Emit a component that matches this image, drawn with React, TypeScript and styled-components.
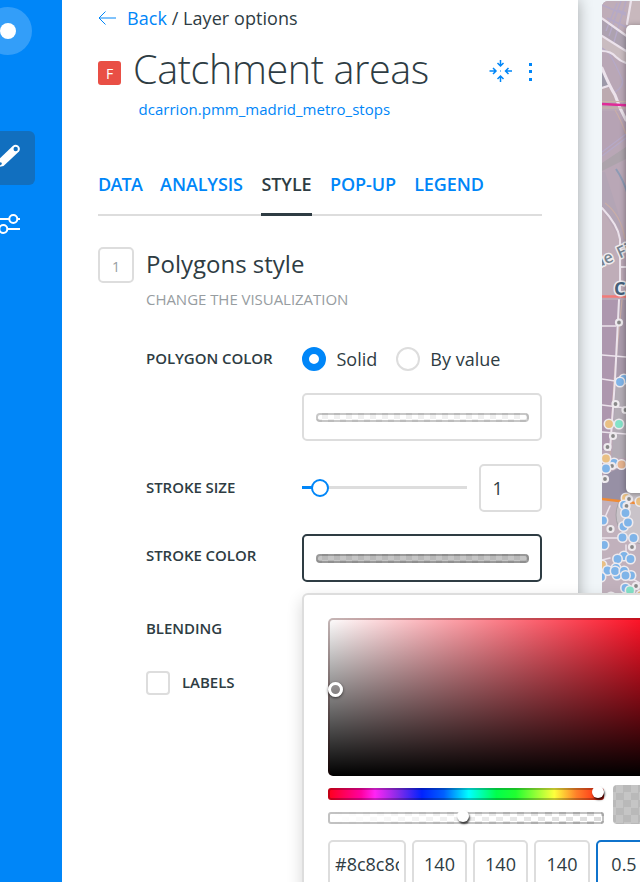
import React from "react";
import styled, { createGlobalStyle } from "styled-components";

const GlobalStyle = createGlobalStyle`
  *, *::before, *::after { box-sizing: border-box; }
  body { margin: 0; overflow: hidden; background: #fff; color: #2e3c43; font-family: "Open Sans", sans-serif; }
  button, input { font: inherit; color: inherit; }
`;

const BLUE = "#0086f8";
const LINE = "#dddddd";
const CHECKS = "repeating-conic-gradient(#e4e4e4 0% 25%, #ffffff 0% 50%) 0 0 / 12px 12px";

const Shell = styled.div`
  position: relative;
  display: grid;
  grid-template-columns: 62px 516px 1fr;
  width: 640px;
  height: 882px;
  overflow: hidden;
`;

const Rail = styled.nav`
  position: relative;
  z-index: 2;
  display: flex;
  flex-direction: column;
  background: ${BLUE};
`;

const Brand = styled.svg`
  display: block;
  width: 62px;
  height: 62px;
`;

const RailButton = styled.button<{ $active?: boolean }>`
  display: block;
  width: 35px;
  height: 54px;
  margin: ${(p) => (p.$active ? "69px 0 0" : "12px 0 0")};
  padding: 0;
  border: 0;
  border-radius: 0 6px 6px 0;
  background: ${(p) => (p.$active ? "#116fbf" : "transparent")};
  svg { display: block; }
`;

const Panel = styled.main`
  position: relative;
  z-index: 1;
  display: flex;
  flex-direction: column;
  padding: 6px 36px 0;
  background: #fff;
  box-shadow: 0 0 14px rgba(0, 0, 0, 0.32);
`;

const Crumbs = styled.div`
  display: flex;
  align-items: center;
  height: 24px;
  font-size: 18px;
  letter-spacing: 0.06px;
  white-space: pre;
  svg { width: 18px; margin-right: 11px; }
  a { color: ${BLUE}; }
`;

const TitleRow = styled.header`
  display: flex;
  align-items: center;
  height: 60px;
  margin-top: 10px;
`;

const Badge = styled.span`
  width: 23px;
  height: 24px;
  margin: 5px 12px 0 0;
  border-radius: 3px;
  background: #e94f45;
  color: #fff;
  font-size: 14px;
  line-height: 25px;
  text-align: center;
`;

const Title = styled.h1`
  flex: 1;
  margin: -2px 0 0;
  font-size: 39.500px;
  font-weight: 300;
  letter-spacing: -0.37px;
  line-height: 60px;
  white-space: nowrap;
`;

const HeaderIcons = styled.svg`
  display: block;
  width: 50px;
  height: 30px;
  margin: 2px 4px 0 0;
`;

const Source = styled.a`
  height: 20px;
  margin: -1px 0 1px 40.500px;
  color: ${BLUE};
  font-size: 15px;
  letter-spacing: 0.03px;
  line-height: 20px;
`;

const Tabs = styled.div`
  display: flex;
  gap: 18px;
  height: 56px;
  margin-top: 40px;
  box-shadow: inset 0 -2px ${LINE};
`;

const Tab = styled.button<{ $w: number; $active?: boolean; $tight?: boolean }>`
  flex: none;
  width: ${(p) => p.$w}px;
  height: 56px;
  padding: 0 0 6px;
  border: 0;
  border-bottom: 3px solid ${(p) => (p.$active ? "#2e3c43" : "transparent")};
  background: none;
  color: ${(p) => (p.$active ? "#2e3c43" : BLUE)};
  font-size: 18px;
  font-weight: 600;
  letter-spacing: ${(p) => (p.$tight ? "-0.8px" : "-0.1px")};
  white-space: nowrap;
`;

const Step = styled.section`
  display: grid;
  grid-template-columns: 36px 1fr;
  column-gap: 12px;
  margin-top: 31px;
`;

const StepNumber = styled.span`
  width: 36px;
  height: 36px;
  border: 2px solid ${LINE};
  border-radius: 5px;
  color: #979da1;
  font-size: 14px;
  line-height: 35px;
  text-align: center;
`;

const StepTitle = styled.h2`
  margin: 0;
  font-size: 24px;
  font-weight: 400;
  line-height: 34px;
`;

const StepHint = styled.p`
  grid-column: 2;
  margin: 5px 0 1px;
  color: #979da1;
  font-size: 15px;
  letter-spacing: -0.04px;
  line-height: 22px;
`;

const Field = styled.div<{ $height: number; $gap: number }>`
  display: grid;
  grid-template-columns: 156px 240px;
  align-items: center;
  height: ${(p) => p.$height}px;
  margin: ${(p) => p.$gap}px 0 0 48px;
`;

const Label = styled.span<{ $lift?: number }>`
  padding-bottom: ${(p) => p.$lift ?? 0}px;
  font-size: 15px;
  font-weight: 600;
  letter-spacing: -0.05px;
  white-space: nowrap;
`;

const Radios = styled.div`
  display: flex;
  align-items: center;
  font-size: 18px;
`;

const Radio = styled.i<{ $on?: boolean }>`
  width: 24px;
  height: 24px;
  margin-right: 10.500px;
  border: ${(p) => (p.$on ? `7.500px solid ${BLUE}` : `2px solid ${LINE}`)};
  border-radius: 50%;
`;

const RadioText = styled.span`
  margin-right: 18.500px;
`;

const ColorBox = styled.button<{ $active?: boolean }>`
  display: flex;
  align-items: center;
  grid-column: 2;
  width: 240px;
  height: 48px;
  padding: 0 11px 0 12px;
  border: 2px solid ${(p) => (p.$active ? "#2e3c43" : LINE)};
  border-radius: 5px;
  background: #fff;
`;

const ColorBar = styled.span<{ $tint: string }>`
  flex: 1;
  height: 9px;
  border: 2px solid rgba(0, 0, 0, 0.22);
  border-radius: 4px;
  background: linear-gradient(${(p) => p.$tint}, ${(p) => p.$tint}) border-box, ${CHECKS} border-box;
`;

const SizeControl = styled.div`
  display: flex;
  align-items: center;
  justify-content: space-between;
`;

const Track = styled.div`
  display: flex;
  align-items: center;
  width: 165px;
  height: 3px;
  margin-top: -2px;
  background: linear-gradient(90deg, ${BLUE} 10px, ${LINE} 10px);
`;

const Knob = styled.i`
  width: 18px;
  height: 18px;
  margin: 1px 0 0 9px;
  border: 2px solid ${BLUE};
  border-radius: 50%;
  background: #fff;
`;

const SizeInput = styled.input`
  width: 63px;
  height: 48px;
  padding: 0 11.500px;
  border: 2px solid ${LINE};
  border-radius: 5px;
  outline: 0;
  font-size: 18px;
`;

const CheckRow = styled.div`
  display: flex;
  align-items: center;
  gap: 12px;
  margin: 31px 0 0 48px;
`;

const Checkbox = styled.i`
  width: 24px;
  height: 24px;
  border: 2px solid ${LINE};
  border-radius: 4px;
`;

const MapArea = styled.aside`
  padding: 1px 0 0 24px;
  background: #f0f5f8;
`;

const MapFrame = styled.div`
  display: grid;
  height: 881px;
  overflow: hidden;
  border-radius: 6px 0 0 0;
  > * { grid-area: 1 / 1; }
`;

const WidgetCard = styled.div`
  width: 30px;
  height: 468px;
  margin: 24px 0 0 24px;
  border-radius: 5px;
  background: #fff;
  box-shadow: 0 1px 6px rgba(0, 0, 0, 0.36);
`;

/* Popup anchored under the active colour field, running past the window edge. */
const Picker = styled.div`
  position: absolute;
  z-index: 2;
  left: 302px;
  top: 593px;
  width: 460px;
  height: 360px;
  padding: 23px 24px;
  border: 2px solid ${LINE};
  border-radius: 6px;
  background: #fff;
  box-shadow: 0 6px 16px rgba(0, 0, 0, 0.16);
`;

const Spectrum = styled.div`
  position: relative;
  width: 340px;
  height: 158px;
  border: solid rgba(50, 0, 0, 0.28);
  border-width: 2px 0 0 2px;
  border-radius: 5px;
  background: linear-gradient(transparent, #000) border-box, linear-gradient(90deg, #fff, #ff0a1f 325px) border-box;
`;

const SpectrumHandle = styled.i`
  position: absolute;
  left: -2px;
  top: 62px;
  width: 15px;
  height: 15px;
  border: 3px solid #fff;
  border-radius: 50%;
  box-shadow: 0 1px 3px rgba(0, 0, 0, 0.6);
`;

const SliderRow = styled.div`
  display: flex;
  gap: 9px;
  margin-top: 9px;
`;

const Sliders = styled.div`
  display: flex;
  flex-direction: column;
  gap: 12px;
  padding-top: 3px;
`;

const Bar = styled.div<{ $alpha?: boolean }>`
  display: flex;
  align-items: center;
  width: 276px;
  height: 12px;
  border: 2px solid rgba(0, 0, 0, 0.24);
  border-radius: 3px;
  background: ${(p) =>
    p.$alpha
      ? `linear-gradient(90deg, #fff, rgba(255,255,255,0)) border-box, ${CHECKS.replace("#e4e4e4", "#dcdcdc").replace("12px 12px", "14px 9px")} border-box`
      : "linear-gradient(90deg, #ff0019, #ff00a0 12%, #ff24f5 17%, #8a2be8 25%, #0022ff 34%, #0060ff 42%, #00ffff 51%, #00ff4c 61%, #20ff30 68%, #fdff3c 82%, #ff8029 90%, #ff1a12) border-box"};
`;

const Grip = styled.i<{ $at: number }>`
  flex: none;
  width: 12px;
  height: 12px;
  margin: -4px 0 0 ${(p) => p.$at}px;
  border-radius: 50%;
  background: #fff;
  box-shadow: 1px 2px 2px rgba(0, 0, 0, 0.7);
`;

const Preview = styled.div`
  width: 70px;
  height: 39px;
  border-radius: 4px;
  background: repeating-conic-gradient(#b9b9b9 0% 25%, #c5c5c5 0% 50%) 3px 0 / 15px 15px;
`;

const ValueRow = styled.div`
  display: flex;
  gap: 6px;
  margin-top: 16px;
`;

const Value = styled.input<{ $w: number; $active?: boolean; $left?: boolean }>`
  flex: none;
  width: ${(p) => p.$w}px;
  height: 48px;
  padding: 0 ${(p) => (p.$left ? 5 : 3)}px;
  border: 2px solid ${(p) => (p.$active ? "#0f73cc" : LINE)};
  border-radius: 5px;
  outline: 0;
  font-size: 18px;
  text-align: ${(p) => (p.$left ? "left" : "center")};
`;

const stops: [number, number, string][] = [
  [17, 322.500, "s"], [22, 379, "b"], [18, 382, "b"], [13.500, 404, "s"], [23.500, 410, "s"],
  [7, 424, "o"], [17, 424, "g"], [11, 436, "s"], [5.500, 447, "s"],
  [12, 463, "b"], [10, 466, "s"], [4, 458.500, "o"], [4, 468.500, "b"], [19.500, 464.500, "r"], [3, 479, "s"],
  [24, 498, "o"], [38, 501.500, "o"], [22, 505, "b"], [27, 499, "s"], [24.500, 506, "s"], [23.500, 513, "b"],
  [1, 520.500, "b"], [21.500, 526.500, "b"], [26, 522.500, "b"], [8.500, 529, "s"], [2, 545, "b"],
  [20.500, 537.500, "b"], [31.500, 538, "b"], [30, 547, "s"], [22, 556, "b"], [15.500, 559, "b"],
  [28.500, 559, "b"], [0, 565, "o"], [14, 568, "b"], [5.500, 570.500, "b"], [15, 575, "b"], [13, 571, "b"],
  [22, 571, "b"], [29, 575.500, "b"], [23.500, 575.500, "b"], [-1, 577, "b"], [9, 597, "b"],
  [23.500, 588, "b"], [34, 586, "s"], [28, 590.500, "g"], [39, 595, "o"],
];
const stopColors: Record<string, string> = { b: "#7fb4e8", o: "#e9c084", g: "#84e2c8", r: "#e6b48f", s: "#888" };

function MapTiles() {
  return (
    <svg width="38" height="881" viewBox="0 1 38 881">
      <rect y="1" width="38" height="881" fill="#b9a7b6" />
      <path d="M0 1h38v90L24 60 0 48Z" fill="#bfadb8" />
      <path d="M0 19l24 17v15L0 36Z" fill="#ada2b0" />
      <path d="M27 1h11v24H25Z" fill="#c8b8bd" />
      <path d="M0 37l24 15v11L10 54 0 51Z" fill="#c9bcc0" />
      <path d="M0 68l9 18-9 2Z" fill="#9c98a8" />
      <path d="M0 88h8l9 20H0Z" fill="#bcaab0" />
      <path d="M0 111h24v26L0 155Z" fill="#b6a3b4" />
      <path d="M0 163l24-16v12L0 171Z" fill="#aca3ab" />
      <path d="M0 172h3l16 50-1 8L0 206Z" fill="#b3a5b5" />
      <path d="M0 210l18 28 4 60H0Z" fill="#bfadb8" />
      <path d="M0 300h16L8 450H0Z" fill="#ad97ae" />
      <path d="M16 300h8v120h-14Z" fill="#a99aab" />
      <path d="M14 378h12v80H10Z" fill="#b3acb5" />
      <path d="M0 476l26-12v36H0Z" fill="#9790a5" />
      <path d="M0 500h38v100H0Z" fill="#c1b1bc" />
      <circle cx="43" cy="515" r="29" fill="#c9c3c9" stroke="#a5a1a6" />
      <g fill="none" stroke="#b5a9c7" strokeWidth="1.4">
        <path d="M4 31 15 3M12 42 24 1M0 5 24 15M5 18l19 9M19 1 7 36M15 10l9 3M0 152l24-18M0 156l24-18" />
        <path d="M0 48l7 5q6 10 13 26 2 5-3 10l-4 3" />
      </g>
      <g fill="none" stroke="#c9ada6" strokeWidth="1.2">
        <path d="M13 110q6 10 11 24M3 203q16 12 20 36M20 300 12 380 8 455" />
      </g>
      <g fill="none" stroke="#ece3ec" strokeLinecap="round">
        <path d="M25 24 29 1M0 18.500l24 17M0 36l24 15M0 51q9 0 14 6 4 4 10 6M0 88l6-2" strokeWidth="2.200" />
        <path d="M0 68q7 17 13 27 4 12 11 25" strokeWidth="3" />
        <path d="M0 208q16 17 18 31v28M18 267v30M19 267h6M17 300 13 380 8 450" strokeWidth="2" />
        <path d="M0 326h14M0 355l24 2M0 379l13 2M0 405l24 3M0 432l24 2M0 538h17M8 506 0 524M24 545v15M30 520l-4 4M0 560l8-2M24 575l14 8" strokeWidth="1.500" />
      </g>
      <path d="M14 169q7 10 12 26" fill="none" stroke="#8e9bb5" strokeWidth="2" />
      <path d="M0 101.500h38M0 108h38" stroke="#c9b3a8" />
      <path d="M0 104l24 1.200" stroke="#df2b98" strokeWidth="2.500" />
      <path d="M0 296.500h38" stroke="#f27b78" strokeWidth="2.500" />
      <path d="M0 499l38 4.500" stroke="#ef8b36" strokeWidth="2.500" />
      <g fontFamily="Open Sans, sans-serif" stroke="#f1edef" strokeWidth="3" paintOrder="stroke" strokeLinejoin="round">
        <text transform="translate(-5 268.500) rotate(-24)" fontSize="16" fontWeight="600" wordSpacing="1.500" fill="#75838f">de Fi</text>
        <text x="12" y="295" fontSize="18" fontWeight="700" fill="#44607a">C</text>
      </g>
      {stops.map(([x, y, kind], i) => (
        <circle key={i} cx={x} cy={y} r={kind === "s" ? 3 : 4.700} fill={stopColors[kind]} stroke="#eeeaee" strokeWidth={kind === "s" ? 2.200 : 1.600} />
      ))}
    </svg>
  );
}

export default function App() {
  return (
    <>
      <GlobalStyle />
      <Shell>
        <Rail>
          <Brand viewBox="0 0 62 62">
            <circle cx="8" cy="31" r="24" fill="#339ef9" />
            <circle cx="8" cy="31" r="8" fill="#fff" />
          </Brand>
          <RailButton $active aria-label="Edit">
            <svg width="35" height="54" viewBox="0 131 35 54">
              <path d="M-3 161 13 145.800q2.500-2 5.300 0 2.800 2.800.7 5.700L3.500 166-5 168Z" fill="#fff" />
              <circle cx="15.700" cy="149" r="2.200" fill="#116fbf" />
              <path d="M-1 163.500l2-1.500 1 2-2 1.500Z" fill="#116fbf" />
            </svg>
          </RailButton>
          <RailButton aria-label="Settings">
            <svg width="35" height="54" viewBox="0 197 35 54" fill="none" stroke="#fff" strokeWidth="2">
              <path d="M0 219h9M17.500 219H20M8 229h12" />
              <circle cx="13.300" cy="219" r="4" />
              <circle cx="3.300" cy="229" r="4" />
            </svg>
          </RailButton>
        </Rail>

        <Panel>
          <Crumbs>
            <svg width="18" height="14" viewBox="0 0 18 14" fill="none" stroke={BLUE} strokeWidth="1">
              <path d="M7.500.5 1 7l6.500 6.500M1 7h17" />
            </svg>
            <a>Back</a>
            <span> / Layer options</span>
          </Crumbs>
          <TitleRow>
            <Badge>F</Badge>
            <Title>Catchment areas</Title>
            <HeaderIcons viewBox="488 56 50 30">
              <path d="M500.500 60v6m-3-3 3 3 3-3M500.500 82v-6m-3 3 3-3 3 3M489.500 71h6.500m-3-3 3 3-3 3M512 71h-6.500m3-3-3 3 3 3" fill="none" stroke={BLUE} strokeWidth="1.500" />
              <path d="M500 70.500h1v1h-1ZM529 63h3v3h-3ZM529 70h3v3h-3ZM529 78h3v3h-3Z" fill={BLUE} />
            </HeaderIcons>
          </TitleRow>
          <Source>dcarrion.pmm_madrid_metro_stops</Source>

          <Tabs>
            <Tab $w={44} $tight>DATA</Tab>
            <Tab $w={83}>ANALYSIS</Tab>
            <Tab $w={51} $active>STYLE</Tab>
            <Tab $w={66}>POP-UP</Tab>
            <Tab $w={70}>LEGEND</Tab>
          </Tabs>

          <Step>
            <StepNumber>1</StepNumber>
            <StepTitle>Polygons style</StepTitle>
            <StepHint>CHANGE THE VISUALIZATION</StepHint>
          </Step>

          <Field $height={24} $gap={36}>
            <Label $lift={2}>POLYGON COLOR</Label>
            <Radios>
              <Radio $on />
              <RadioText>Solid</RadioText>
              <Radio />
              <RadioText>By value</RadioText>
            </Radios>
          </Field>
          <Field $height={48} $gap={22}>
            <ColorBox><ColorBar $tint="rgba(255,255,255,0.45)" /></ColorBox>
          </Field>
          <Field $height={48} $gap={23}>
            <Label $lift={2}>STROKE SIZE</Label>
            <SizeControl>
              <Track><Knob /></Track>
              <SizeInput defaultValue="1" />
            </SizeControl>
          </Field>
          <Field $height={48} $gap={22}>
            <Label $lift={6}>STROKE COLOR</Label>
            <ColorBox $active><ColorBar $tint="rgba(140,140,140,0.5)" /></ColorBox>
          </Field>
          <Field $height={24} $gap={34}>
            <Label>BLENDING</Label>
          </Field>
          <CheckRow>
            <Checkbox />
            <Label $lift={2}>LABELS</Label>
          </CheckRow>
        </Panel>

        <MapArea>
          <MapFrame>
            <MapTiles />
            <WidgetCard />
          </MapFrame>
        </MapArea>

        <Picker>
          <Spectrum><SpectrumHandle /></Spectrum>
          <SliderRow>
            <Sliders>
              <Bar><Grip $at={262} /></Bar>
              <Bar $alpha><Grip $at={127} /></Bar>
            </Sliders>
            <Preview />
          </SliderRow>
          <ValueRow>
            <Value $w={78} $left defaultValue="#8c8c8c" />
            <Value $w={55} defaultValue="140" />
            <Value $w={55} defaultValue="140" />
            <Value $w={56} defaultValue="140" />
            <Value $w={56} $active defaultValue="0.5" />
          </ValueRow>
        </Picker>
      </Shell>
    </>
  );
}
